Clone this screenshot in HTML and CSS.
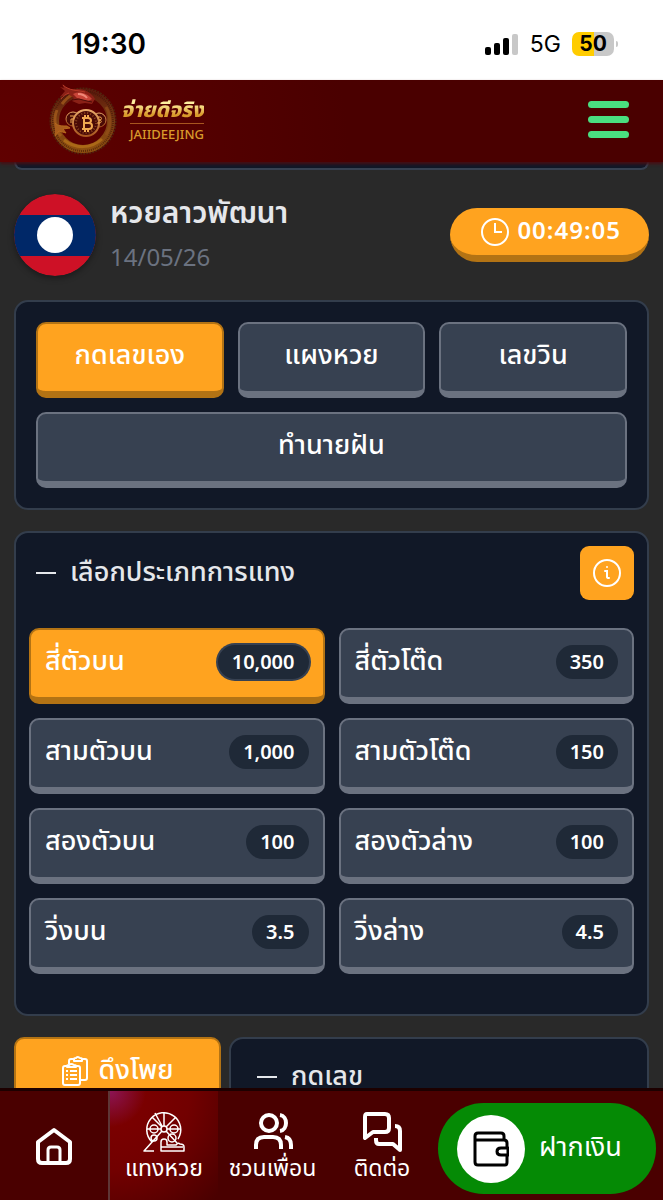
FILE: index.html
```html
<!DOCTYPE html>
<html lang="th">
<head>
    <meta charset="UTF-8">
    <meta name="viewport" content="width=device-width, initial-scale=1.0">
    <title>หวยลาวพัฒนา</title>
    <link rel="stylesheet" href="styles.css">
</head>
<body>
    <div class="status-bar">
        <span class="clock">19:30</span>
        <div class="status-icons">
            <svg width="34" height="22" viewBox="0 0 34 22">
                <rect x="0" y="14" width="6" height="8" rx="2"/>
                <rect x="9" y="10" width="6" height="12" rx="2"/>
                <rect x="18" y="5" width="6" height="17" rx="2"/>
                <rect x="27" y="1" width="6" height="21" rx="2" fill="#c8c8c8"/>
            </svg>
            <span class="network">5G</span>
            <span class="battery">50</span>
        </div>
    </div>

    <header class="header">
        <a href="#" class="logo">
            <svg width="70" height="74" viewBox="0 0 70 74">
                <defs>
                    <linearGradient id="ring" x1="0" y1="0" x2="0" y2="1">
                        <stop offset="0" stop-color="#5e1c0c"/>
                        <stop offset=".5" stop-color="#7a3c12"/>
                        <stop offset="1" stop-color="#8e5010"/>
                    </linearGradient>
                    <linearGradient id="gold" x1="0" y1="0" x2="0" y2="1">
                        <stop offset="0" stop-color="#e8a868"/>
                        <stop offset="1" stop-color="#a8561f"/>
                    </linearGradient>
                </defs>
                <circle cx="35" cy="39" r="32" fill="none" stroke="#50240e" stroke-width="3" stroke-dasharray="2 1"/>
                <circle cx="35" cy="39" r="28" fill="none" stroke="url(#ring)" stroke-width="8"/>
                <circle cx="35" cy="39" r="30" fill="none" stroke="#3e1408" stroke-width="2" stroke-dasharray="1 1" opacity=".6"/>
                <path d="M9 28c-4 9-2 19 4 26M14 22c3-4 6-7 10-9" fill="none" stroke="#a8601c" stroke-width="3" opacity=".7"/>
                <path d="M16 58c11 9 27 9 38-1" fill="none" stroke="#c07c1c" stroke-width="3" opacity=".6"/>
                <path d="M58 25c5 8 5 20 0 28" fill="none" stroke="#96521a" stroke-width="3" opacity=".6"/>
                <path d="M14 2c4 4 9 6 15 5 8 0 15 4 18 10l-3 5-7-1-6 1-7-3 2-3-6-4-8 3 5-6-5-4 4 1z" fill="#8a2016"/>
                <path d="M15 3c6 6 14 5 22 7M21 11c-3 1-6 3-8 6" fill="none" stroke="#b83a28" stroke-width="1"/>
                <path d="M25 12c6-3 14-1 19 5l-4 2-5-1-6-2z" fill="#c84438"/>
                <path d="M30 12q6 0 9 4" fill="none" stroke="#f08878" stroke-width="2"/>
                <path d="M24 18l7-1 8 2 5 1" fill="none" stroke="#4a0c08" stroke-width="1"/>
                <path d="M7 41c3 3 6 3 12 3l3 2-7 1 3 4-7-2-4 5" fill="#a85c1c" stroke="#b8681c" stroke-width="1"/>
                <g fill="#4a0a06" stroke="url(#gold)" stroke-width="1">
                    <circle cx="25" cy="37" r="7"/>
                    <circle cx="51" cy="38" r="7"/>
                    <circle cx="38" cy="41" r="13" stroke-width="2"/>
                </g>
                <circle cx="38" cy="41" r="10" fill="none" stroke="#8a4420" stroke-width="2" stroke-dasharray="1 2"/>
                <g fill="none" stroke="#f0a850" stroke-linejoin="round">
                    <path d="M34 36h6c4 0 4 5 0 5h-4h5c4 0 4 6 0 6h-7M36 36v11M37 33v3M40 33v3M37 47v3M40 47v3" stroke-width="2"/>
                    <path d="M22 34h3c2 0 2 3 0 3h-2v4M50 35h2c2 0 2 3 0 3h-1c3 0 3 3 0 3h-2" stroke-width="1"/>
                </g>
            </svg>
            <span class="logo-text">
                <span class="logo-thai">จ่ายดีจริง</span>
                <span class="logo-latin">JAIIDEEJING</span>
            </span>
        </a>
        <button class="menu-btn" aria-label="เมนู"><i></i><i></i><i></i></button>
    </header>

    <main class="content">
        <div class="panel-end"></div>

        <section class="lotto">
            <svg class="flag" viewBox="0 0 82 82">
                <defs><clipPath id="round"><circle cx="41" cy="41" r="41"/></clipPath></defs>
                <g clip-path="url(#round)">
                    <rect width="82" height="82" fill="#ce1126"/>
                    <rect y="21" width="82" height="41" fill="#002868"/>
                    <circle cx="41" cy="41" r="18" fill="#fff"/>
                </g>
            </svg>
            <div class="lotto-info">
                <h1>หวยลาวพัฒนา</h1>
                <time datetime="2026-05-14">14/05/26</time>
            </div>
            <div class="countdown">
                <svg width="30" height="30" viewBox="0 0 30 30" fill="none" stroke="#fff" stroke-width="2">
                    <circle cx="15" cy="15" r="13"/>
                    <path d="M15 6v9h7"/>
                </svg>
                <span>00:49:05</span>
            </div>
        </section>

        <section class="panel modes">
            <button class="key active">กดเลขเอง</button>
            <button class="key">แผงหวย</button>
            <button class="key">เลขวิน</button>
            <button class="key wide">ทำนายฝัน</button>
        </section>

        <section class="panel types">
            <div class="panel-head">
                <h2>เลือกประเภทการแทง</h2>
                <button class="info-btn" aria-label="ข้อมูล">
                    <svg width="28" height="28" viewBox="0 0 28 28" fill="none" stroke="#fff" stroke-width="2">
                        <circle cx="14" cy="14" r="13"/>
                        <path d="M12 12h2v6q0 1 2 1" stroke-linecap="round"/>
                        <circle cx="14" cy="8" r="1" fill="#fff" stroke="none"/>
                    </svg>
                </button>
            </div>
            <div class="type-grid">
                <button class="key type active">สี่ตัวบน <span class="rate">10,000</span></button>
                <button class="key type">สี่ตัวโต๊ด <span class="rate">350</span></button>
                <button class="key type">สามตัวบน <span class="rate">1,000</span></button>
                <button class="key type">สามตัวโต๊ด <span class="rate">150</span></button>
                <button class="key type">สองตัวบน <span class="rate">100</span></button>
                <button class="key type">สองตัวล่าง <span class="rate">100</span></button>
                <button class="key type">วิ่งบน <span class="rate">3.5</span></button>
                <button class="key type">วิ่งล่าง <span class="rate">4.5</span></button>
            </div>
        </section>

        <section class="entry">
            <button class="key active pull">
                <svg width="26" height="30" viewBox="0 0 26 30" fill="none" stroke="#fff" stroke-width="2" stroke-linejoin="round">
                    <path d="M7 8V5q0-2 2-2h3M20 3h3q2 0 2 2v17q0 2-2 2h-4M12 5V3q0-1 2-1 1-2 4 0 2 0 2 1v2z"/>
                    <path d="M5 10H3q-2 0-2 2v15q0 2 2 2h13q2 0 2-2V12q0-2-2-2h-2M5 11v-1q0-1 2-1 2-2 5 0 2 0 2 1v1z"/>
                    <path d="M4 15h2M8 15h7M4 19h2M8 19h7M4 23h2M8 23h7"/>
                </svg>
                ดึงโพย
            </button>
            <div class="panel numbers"><h2>กดเลข</h2></div>
        </section>
    </main>

    <nav class="bottom-nav">
        <a href="#" class="home" aria-label="หน้าแรก">
            <svg width="36" height="38" viewBox="0 0 36 38" fill="none" stroke="#fff" stroke-width="4" stroke-linejoin="round">
                <path d="M2 15L18 3l16 12v17q0 4-4 4H6q-4 0-4-4z"/>
                <path d="M12 36V23q0-3 3-3h6q3 0 3 3v13" stroke-width="3"/>
            </svg>
        </a>
        <a href="#" class="active">
            <svg width="42" height="42" viewBox="0 0 42 42" fill="none" stroke="#fff" stroke-width="1.500" stroke-linejoin="round">
                <path d="M9 32A17 17 0 1 1 35 29"/>
                <circle cx="21" cy="19" r="3"/>
                <path d="M21 2v14M4 19h14M24 19h14M9 7l10 10M33 7L23 17M12 3l7 13M19 21L1 41h10M23 21l11 12"/>
                <circle cx="11" cy="19" r="4"/><circle cx="31" cy="19" r="4"/>
                <circle cx="11" cy="28" r="3"/><circle cx="29" cy="28" r="4"/>
                <path d="M18 41V32q0-3 3-3t3 3v3h9q2-3 4-1 4 0 4 3v4zM18 37h22"/>
            </svg>
            แทงหวย
        </a>
        <a href="#">
            <svg width="42" height="42" viewBox="0 0 42 42" fill="none" stroke="#fff" stroke-width="4">
                <circle cx="17" cy="13" r="8"/>
                <path d="M4 39v-4q0-8 8-8h9q8 0 8 8v4M28 5c8 1 8 15 0 16M33 27q6 1 6 8v4"/>
            </svg>
            ชวนเพื่อน
        </a>
        <a href="#">
            <svg width="42" height="42" viewBox="0 0 42 42" fill="none" stroke="#fff" stroke-width="4" stroke-linejoin="round">
                <path d="M6 4h18q4 0 4 4v10q0 4-4 4H12l-8 6V7q0-3 2-3z"/>
                <path d="M34 16q5 0 5 5v19l-7-6H18q-3 0-3-4v-2"/>
            </svg>
            ติดต่อ
        </a>
        <a href="#" class="deposit">
            <span class="wallet">
                <svg width="36" height="36" viewBox="0 0 36 36" fill="none" stroke="#000" stroke-width="3" stroke-linejoin="round">
                    <path d="M31 9V5q0-3-3-3H5q-3 0-3 3v26q0 3 3 3h27q2 0 2-3v-7M2 9h29q3 0 3 3v5"/>
                    <path d="M35 17h-7q-4 0-4 3.500t4 3.500h7z"/>
                </svg>
            </span>
            <span class="deposit-label">ฝากเงิน</span>
        </a>
    </nav>
</body>
</html>
```

FILE: styles.css
```css
* {
    box-sizing: border-box;
}
body {
    display: flex;
    flex-direction: column;
    height: 100vh;
    margin: 0;
    overflow: hidden;
    background-color: #292929;
    color: #fff;
    font-family: "Noto Sans", "Noto Sans Thai", sans-serif;
}
h1, h2 {
    margin: 0;
    font-weight: 500;
    color: #e5e7eb;
}
a {
    color: inherit;
    text-decoration: none;
}
svg {
    flex: none;
}
button {
    font: inherit;
    color: inherit;
    cursor: pointer;
}

/* phone status bar */
.status-bar {
    display: flex;
    flex: none;
    align-items: center;
    justify-content: space-between;
    height: 80px;
    padding: 8px 49px 0 71px;
    background-color: #fff;
    color: #000;
    font-family: Inter, sans-serif;
}
.clock {
    font-size: 28px;
    font-weight: 600;
}
.status-icons {
    display: flex;
    align-items: center;
    gap: 11px;
}
.network {
    font-size: 23px;
}
.battery {
    position: relative;
    width: 42px;
    border-radius: 7px;
    background: linear-gradient(90deg, #fc0 52%, #c8c8c8 52%);
    font-size: 21px;
    font-weight: 700;
    line-height: 24px;
    text-align: center;
}
.battery::after {
    content: "";
    position: absolute;
    top: 9px;
    right: -4px;
    width: 2px;
    height: 6px;
    border-radius: 0 2px 2px 0;
    background-color: #c8c8c8;
}

/* header */
.header {
    display: flex;
    flex: none;
    align-items: center;
    justify-content: space-between;
    height: 82px;
    padding: 0 34px 4px 48px;
    background: radial-gradient(circle at 0 100%, #600000, #4a0000 350px);
    box-shadow: 0 2px 3px #4a0d12;
    z-index: 1;
}
.logo {
    display: flex;
    align-items: center;
    gap: 3px;
}
.logo-text {
    display: flex;
    flex-direction: column;
    align-items: flex-end;
}
.logo-thai {
    background: linear-gradient(#fff0a0 30%, #d99a2b 70%);
    background-clip: text;
    color: transparent;
    font-size: 21px;
    font-weight: 800;
    font-style: italic;
    line-height: 28px;
}
.logo-latin {
    border-top: 1px solid #a8561f;
    color: #d99a2b;
    font-size: 13px;
    font-weight: 500;
    line-height: 20px;
}
.menu-btn {
    display: flex;
    flex-direction: column;
    gap: 8px;
    padding: 0;
    border: none;
    background: none;
}
.menu-btn i {
    width: 41px;
    height: 7px;
    border-radius: 4px;
    background-color: #4ade80;
}

/* page */
.content {
    display: flex;
    flex: 1;
    flex-direction: column;
    min-height: 0;
    padding: 0 14px;
    overflow: hidden;
}
.content > * {
    flex: none;
}
.panel {
    border: 2px solid #333d4c;
    border-radius: 14px;
    background-color: #111827;
}
.panel-end {
    height: 8px;
    border: 2px solid #374151;
    border-top: none;
    border-radius: 0 0 14px 14px;
    background-color: #111827;
}
.lotto {
    display: flex;
    align-items: center;
    gap: 14px;
    margin: 24px 0;
}
.flag {
    width: 82px;
    height: 82px;
    border-radius: 50%;
    box-shadow: 0 2px 6px rgba(0,0,0,0.4);
}
.lotto-info {
    flex: 1;
}
.lotto-info h1 {
    font-size: 30px;
    font-weight: 600;
    line-height: 36px;
}
.lotto-info time {
    display: block;
    margin-top: 8px;
    color: #6b7280;
    font-size: 24px;
    line-height: 38px;
}
.countdown {
    display: flex;
    align-items: center;
    gap: 7px;
    height: 54px;
    padding: 0 28px 0 30px;
    border-bottom: 7px solid #b37314;
    border-radius: 27px;
    background-color: #ffa31f;
    font-size: 24px;
    font-weight: 600;
    letter-spacing: 1px;
}
.countdown span {
    padding-bottom: 4px;
}

/* raised buttons */
.key {
    height: 76px;
    padding: 0 14px 4px;
    border: 2px solid #6b7280;
    border-bottom-width: 7px;
    border-radius: 10px;
    background-color: #374151;
    font-size: 27px;
    font-weight: 500;
}
.key.active {
    border-color: #b37314;
    background-color: #ffa31f;
}
.modes {
    display: grid;
    grid-template-columns: repeat(3, 1fr);
    gap: 14px;
    padding: 20px;
}
.wide {
    grid-column: 1 / -1;
}
.types {
    margin: 21px 0;
    padding: 13px 13px 40px;
}
.panel-head {
    display: flex;
    align-items: center;
    justify-content: space-between;
    margin-bottom: 28px;
    padding-left: 7px;
}
h2 {
    display: flex;
    align-items: center;
    gap: 14px;
    padding-bottom: 4px;
    font-size: 27px;
    line-height: 36px;
}
h2::before {
    content: "";
    width: 20px;
    height: 2px;
    margin-top: 4px;
    background-color: #e5e7eb;
}
.info-btn {
    display: flex;
    align-items: center;
    justify-content: center;
    width: 54px;
    height: 54px;
    border: none;
    border-radius: 9px;
    background-color: #ffa31f;
}
.type-grid {
    display: grid;
    grid-template-columns: 1fr 1fr;
    gap: 14px;
}
.type {
    display: flex;
    align-items: center;
    justify-content: space-between;
}
.rate {
    padding: 0 14px;
    border-radius: 17px;
    background-color: #1f2937;
    font-size: 20px;
    font-weight: 600;
    line-height: 34px;
}
.active .rate {
    box-shadow: 0 0 0 2px #374151;
}
.entry {
    display: flex;
    gap: 8px;
}
.pull {
    display: flex;
    align-items: center;
    justify-content: center;
    gap: 11px;
    width: 207px;
}
.numbers {
    flex: 1;
    height: 76px;
    padding: 18px 26px;
}

/* bottom menu */
.bottom-nav {
    display: grid;
    flex: none;
    grid-template-columns: 108fr 110fr 109fr 110fr 226fr;
    height: 112px;
    border-top: 3px solid #1c0000;
    background-color: #4a0000;
    z-index: 1;
}
.bottom-nav a {
    display: flex;
    flex-direction: column;
    align-items: center;
    justify-content: center;
    font-size: 23px;
    line-height: 30px;
    white-space: nowrap;
}
.bottom-nav .active {
    border-left: 2px solid #5e3535;
    background: radial-gradient(circle at 0 0, #8c1455, #7a0000 36px, #720000 80px, #4a0000 150px);
}
.bottom-nav .deposit {
    flex-direction: row;
    justify-content: flex-start;
    gap: 14px;
    margin: 12px 7px 6px 1px;
    padding-left: 19px;
    border-radius: 46px;
    background-color: #058a05;
    font-size: 27px;
}
.deposit-label {
    padding-bottom: 6px;
}
.wallet {
    display: flex;
    align-items: center;
    justify-content: center;
    width: 68px;
    height: 68px;
    border-radius: 50%;
    background-color: #fff;
}
```
